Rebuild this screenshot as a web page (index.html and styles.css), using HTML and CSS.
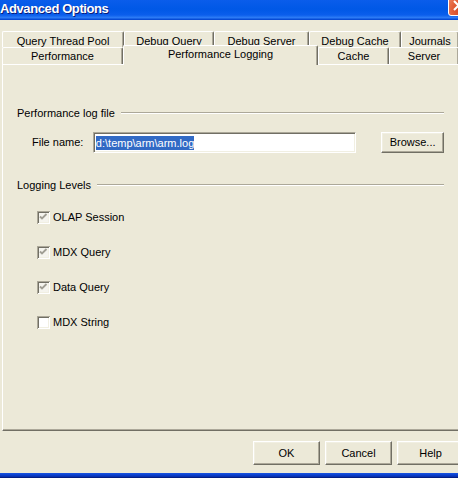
FILE: index.html
```html
<!DOCTYPE html>
<html>
<head>
<meta charset="utf-8">
<link rel="stylesheet" href="styles.css">
</head>
<body>
<div class="window">
  <div class="titlebar">
    <span class="title">Advanced Options</span>
    <span class="close">
      <svg width="21" height="21" viewBox="0 0 21 21"><path d="M6 6 L15 15 M15 6 L6 15" stroke="#fff" stroke-width="2"/></svg>
    </span>
  </div>

  <div class="tabrow back">
    <div class="tab t-qtp">Query Thread Pool</div>
    <div class="tab t-dq">Debug Query</div>
    <div class="tab t-ds">Debug Server</div>
    <div class="tab t-dc">Debug Cache</div>
    <div class="tab t-jr">Journals</div>
  </div>
  <div class="tabrow front">
    <div class="tab t-perf">Performance</div>
    <div class="tab t-pl selected">Performance Logging</div>
    <div class="tab t-cache">Cache</div>
    <div class="tab t-server">Server</div>
  </div>

  <div class="panel">
    <div class="inner">
      <div class="group-head first">
        <span>Performance log file</span>
        <span class="rule"></span>
      </div>
      <div class="file-row">
        <span class="file-label">File name:</span>
        <span class="textbox"><span class="sel">d:\temp\arm\arm.log</span></span>
        <span class="btn browse">Browse...</span>
      </div>
      <div class="group-head second">
        <span>Logging Levels</span>
        <span class="rule"></span>
      </div>
      <div class="checks">
        <div class="check">
          <svg class="cb" width="13" height="13" viewBox="0 0 13 13"><rect x="0" y="0" width="13" height="13" fill="#ACA899"/><rect x="1" y="1" width="12" height="12" fill="#fff"/><rect x="1" y="1" width="11" height="11" fill="#716F64"/><rect x="2" y="2" width="10" height="10" fill="#F1EFE2"/><rect x="2" y="2" width="9" height="9" fill="#F5F4EE"/><path d="M3 5.5 L5 7.5 L9.5 3" stroke="#A09E94" stroke-width="1.8" fill="none"/></svg>
          <span>OLAP Session</span>
        </div>
        <div class="check">
          <svg class="cb" width="13" height="13" viewBox="0 0 13 13"><rect x="0" y="0" width="13" height="13" fill="#ACA899"/><rect x="1" y="1" width="12" height="12" fill="#fff"/><rect x="1" y="1" width="11" height="11" fill="#716F64"/><rect x="2" y="2" width="10" height="10" fill="#F1EFE2"/><rect x="2" y="2" width="9" height="9" fill="#F5F4EE"/><path d="M3 5.5 L5 7.5 L9.5 3" stroke="#A09E94" stroke-width="1.8" fill="none"/></svg>
          <span>MDX Query</span>
        </div>
        <div class="check">
          <svg class="cb" width="13" height="13" viewBox="0 0 13 13"><rect x="0" y="0" width="13" height="13" fill="#ACA899"/><rect x="1" y="1" width="12" height="12" fill="#fff"/><rect x="1" y="1" width="11" height="11" fill="#716F64"/><rect x="2" y="2" width="10" height="10" fill="#F1EFE2"/><rect x="2" y="2" width="9" height="9" fill="#F5F4EE"/><path d="M3 5.5 L5 7.5 L9.5 3" stroke="#A09E94" stroke-width="1.8" fill="none"/></svg>
          <span>Data Query</span>
        </div>
        <div class="check">
          <svg class="cb" width="13" height="13" viewBox="0 0 13 13"><rect x="0" y="0" width="13" height="13" fill="#ACA899"/><rect x="1" y="1" width="12" height="12" fill="#fff"/><rect x="1" y="1" width="11" height="11" fill="#716F64"/><rect x="2" y="2" width="10" height="10" fill="#F1EFE2"/><rect x="2" y="2" width="9" height="9" fill="#fff"/></svg>
          <span>MDX String</span>
        </div>
      </div>
    </div>
  </div>

  <div class="buttons">
    <span class="btn">OK</span>
    <span class="btn">Cancel</span>
    <span class="btn">Help</span>
  </div>

  <div class="frame-bottom"></div>
</div>
</body>
</html>
```

FILE: styles.css
```css
html, body {
  margin: 0;
  padding: 0;
  background: #ECE9D8;
}

.window {
  width: 458px;
  height: 478px;
  overflow: hidden;
  background: #ECE9D8;
  display: flex;
  flex-direction: column;
  font-family: "Liberation Sans", Arial, sans-serif;
  font-size: 11px;
  color: #000;
}

.titlebar {
  height: 20px;
  flex: none;
  display: flex;
  align-items: flex-end;
  justify-content: space-between;
  overflow: hidden;
  background: linear-gradient(to bottom, #0A5DEB 0%, #0058E6 45%, #0A5EEC 75%, #2C7BF5 88%, #0B52DC 96%, #0040C8 100%);
}

.title {
  margin-left: 0;
  margin-bottom: 4px;
  color: #fff;
  font-weight: bold;
  font-size: 13px;
  line-height: 15px;
  letter-spacing: -0.4px;
  text-shadow: 1px 1px #0A1C7A;
  white-space: nowrap;
}

.close {
  flex: none;
  width: 21px;
  height: 21px;
  box-sizing: border-box;
  margin-right: -11px;
  margin-bottom: 4px;
  border: 1px solid #fff;
  border-radius: 3px;
  background: radial-gradient(circle at 70% 75%, #CC4423 0%, #E25E37 50%, #EE8A68 100%);
  display: flex;
}
.close svg {
  margin: -1px;
}

.tabrow {
  display: flex;
  flex: none;
  padding-left: 2px;
}

.tabrow.back {
  margin-top: 11px;
  height: 16px;
  overflow: hidden;
}

.tabrow.front {
  margin-top: -2px;
  height: 19px;
  position: relative;
  z-index: 2;
}

.tab {
  flex: none;
  box-sizing: border-box;
  height: 18px;
  border-top: 1px solid #fff;
  border-left: 1px solid #fff;
  border-right: 1px solid #716F64;
  box-shadow: inset -1px 0 #ACA899;
  border-top-left-radius: 2px;
  border-top-right-radius: 2px;
  padding-top: 3px;
  line-height: 13px;
  text-align: center;
  white-space: nowrap;
  overflow: hidden;
  background: #ECE9D8;
}

.t-qtp { width: 122px; }
.t-dq { width: 90px; }
.t-ds { width: 95px; }
.t-dc { width: 92px; }
.t-jr { width: 58px; }

.front .tab {
  margin-top: 2px;
  height: 17px;
  padding-top: 2px;
}

.t-perf { width: 121px; }
.t-pl { width: 195px; }
.t-cache { width: 71px; }
.t-server { width: 70px; }

.front .tab.selected {
  margin-top: 0;
  height: 20px;
  padding-top: 2px;
}

.panel {
  flex: none;
  width: 480px;
  height: 367px;
  margin-left: 2px;
  box-sizing: border-box;
  border-top: 1px solid #fff;
  border-left: 1px solid #fff;
  border-bottom: 1px solid #716F64;
  box-shadow: inset 0 -1px #ACA899;
  position: relative;
  z-index: 1;
}

.inner {
  width: 427px;
  padding-left: 14px;
  display: flex;
  flex-direction: column;
}

.group-head {
  display: flex;
  align-items: center;
  height: 13px;
  line-height: 13px;
  white-space: nowrap;
}
.group-head.first { margin-top: 42px; }
.group-head.second { margin-top: 26px; }

.rule {
  flex: 1;
  height: 0;
  margin-left: 6px;
  margin-top: -2px;
  border-top: 1px solid #ACA899;
  border-bottom: 1px solid #fff;
}

.file-row {
  margin-top: 12px;
  display: flex;
  align-items: center;
  height: 21px;
}

.file-label {
  margin-left: 15px;
  width: 61px;
  line-height: 13px;
}

.textbox {
  width: 264px;
  height: 21px;
  box-sizing: border-box;
  border-top: 1px solid #ACA899;
  border-left: 1px solid #ACA899;
  border-right: 1px solid #fff;
  border-bottom: 1px solid #fff;
  box-shadow: inset 1px 1px #716F64, inset -1px -1px #F1EFE2;
  background: #fff;
  padding: 3px 0 0 2px;
  display: flex;
  align-items: flex-start;
}

.sel {
  background: #316AC5;
  color: #fff;
  line-height: 14px;
  height: 14px;
  white-space: nowrap;
}

.btn {
  display: flex;
  align-items: center;
  justify-content: center;
  box-sizing: border-box;
  border-top: 1px solid #fff;
  border-left: 1px solid #fff;
  border-right: 1px solid #716F64;
  border-bottom: 1px solid #716F64;
  box-shadow: inset -1px -1px #ACA899, inset 1px 1px #F1EFE2;
  background: #ECE9D8;
  line-height: 13px;
}

.browse {
  margin-left: 25px;
  width: 63px;
  height: 21px;
}

.checks {
  margin-top: 19px;
  padding-left: 20px;
  display: flex;
  flex-direction: column;
  gap: 22px;
}

.check {
  display: flex;
  align-items: center;
  height: 13px;
  gap: 3px;
  line-height: 13px;
}

.cb {
  flex: none;
  display: block;
}

.buttons {
  flex: none;
  margin-top: 10px;
  display: flex;
  gap: 5px;
  padding-left: 253px;
}

.buttons .btn {
  flex: none;
  width: 67px;
  height: 24px;
}

.frame-bottom {
  flex: none;
  margin-top: auto;
  height: 5px;
  background: linear-gradient(to bottom, #1A54E0 0%, #0A3FD0 40%, #0831B0 70%, #00146E 100%);
}
```
